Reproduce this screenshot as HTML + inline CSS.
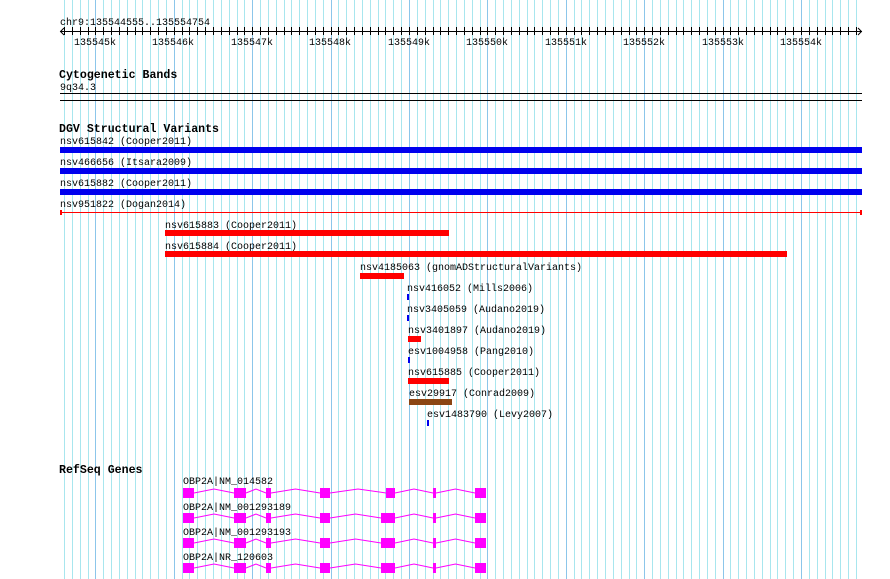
<!DOCTYPE html>
<html><head><meta charset="utf-8"><style>
html,body{margin:0;padding:0;background:#fff;width:890px;height:579px;overflow:hidden}
svg{display:block}
text{font-family:"Liberation Mono",monospace;font-size:10px;fill:#000}
.b{font-weight:bold;font-size:11.6px}
</style></head><body>
<svg id="s" width="890" height="579" xmlns="http://www.w3.org/2000/svg">
<g id="grid"></g>
<g id="ruler" stroke="#000" stroke-width="1"></g>
<text x="60" y="25">chr9:135544555..135554754</text>
<text x="95" y="45" text-anchor="middle">135545k</text>
<text x="173" y="45" text-anchor="middle">135546k</text>
<text x="252" y="45" text-anchor="middle">135547k</text>
<text x="330" y="45" text-anchor="middle">135548k</text>
<text x="409" y="45" text-anchor="middle">135549k</text>
<text x="487" y="45" text-anchor="middle">135550k</text>
<text x="566" y="45" text-anchor="middle">135551k</text>
<text x="644" y="45" text-anchor="middle">135552k</text>
<text x="723" y="45" text-anchor="middle">135553k</text>
<text x="801" y="45" text-anchor="middle">135554k</text>
<text class="b" x="59" y="78">Cytogenetic Bands</text>
<text x="60" y="90">9q34.3</text>
<rect x="60" y="93" width="802" height="1" fill="#000"/>
<rect x="60" y="100" width="802" height="1" fill="#000"/>
<text class="b" x="59" y="132">DGV Structural Variants</text>
<text x="60" y="144">nsv615842 (Cooper2011)</text>
<rect x="60" y="147" width="802" height="6" fill="#0000ee"/>
<text x="60" y="165">nsv466656 (Itsara2009)</text>
<rect x="60" y="168" width="802" height="6" fill="#0000ee"/>
<text x="60" y="186">nsv615882 (Cooper2011)</text>
<rect x="60" y="189" width="802" height="6" fill="#0000ee"/>
<text x="60" y="207">nsv951822 (Dogan2014)</text>
<rect x="60" y="212" width="802" height="1" fill="#f00"/>
<rect x="60" y="210" width="2" height="5" fill="#f00"/>
<rect x="860" y="210" width="2" height="5" fill="#f00"/>
<text x="165" y="228">nsv615883 (Cooper2011)</text>
<rect x="165" y="230" width="284" height="6" fill="#f00"/>
<text x="165" y="249">nsv615884 (Cooper2011)</text>
<rect x="165" y="251" width="622" height="6" fill="#f00"/>
<text x="360" y="270">nsv4185063 (gnomADStructuralVariants)</text>
<rect x="360" y="273" width="44" height="6" fill="#f00"/>
<text x="407" y="291">nsv416052 (Mills2006)</text>
<rect x="407" y="294" width="2" height="6" fill="#0000ee"/>
<text x="407" y="312">nsv3405059 (Audano2019)</text>
<rect x="407" y="315" width="2" height="6" fill="#0000ee"/>
<text x="408" y="333">nsv3401897 (Audano2019)</text>
<rect x="408" y="336" width="13" height="6" fill="#f00"/>
<text x="408" y="354">esv1004958 (Pang2010)</text>
<rect x="408" y="357" width="2" height="6" fill="#0000ee"/>
<text x="408" y="375">nsv615885 (Cooper2011)</text>
<rect x="408" y="378" width="41" height="6" fill="#f00"/>
<text x="409" y="396">esv29917 (Conrad2009)</text>
<rect x="409" y="399" width="43" height="6" fill="#8b4513"/>
<text x="427" y="417">esv1483790 (Levy2007)</text>
<rect x="427" y="420" width="2" height="6" fill="#0000ee"/>
<text class="b" x="59" y="473">RefSeq Genes</text>
<text x="183" y="484">OBP2A|NM_014582</text>
<text x="183" y="510">OBP2A|NM_001293189</text>
<text x="183" y="535">OBP2A|NM_001293193</text>
<text x="183" y="560">OBP2A|NR_120603</text>
<g id="genes"></g>
</svg>
<script>
var NS="http://www.w3.org/2000/svg";
function el(p,t,a){var e=document.createElementNS(NS,t);for(var k in a)e.setAttribute(k,a[k]);p.appendChild(e);return e;}
var g=document.getElementById("grid"),r=document.getElementById("ruler");
var base=95.4,step=7.84;
for(var n=-5;n<110;n++){var x=base+n*step;if(x<60||x>862)continue;
 var xr=Math.round(x)+0.5;var major=(n%10===0);
 el(g,"line",{x1:xr,y1:0,x2:xr,y2:579,stroke:major?"#8cc6ea":"#a8e6ee","stroke-width":1});
 el(r,"line",{x1:xr,y1:27,x2:xr,y2:35});
}
el(r,"line",{x1:60,y1:31.5,x2:862,y2:31.5});
el(r,"polyline",{points:"64,28 60.5,31.5 64,35",fill:"none"});
el(r,"polyline",{points:"858,28 861.5,31.5 858,35",fill:"none"});
var G=document.getElementById("genes");
var rows=[488,513,538,563];
var ex=[[[183,194],[234,246],[266,271],[320,330],[386,395],[433,436],[475,486]],
[[183,194],[234,246],[266,271],[320,330],[381,395],[433,436],[475,486]],
[[183,194],[234,246],[266,271],[320,330],[381,395],[433,436],[475,486]],
[[183,194],[234,246],[266,271],[320,330],[381,395],[433,436],[475,486]]];
rows.forEach(function(y,i){var e=ex[i];
 for(var j=0;j<e.length-1;j++){var a=e[j][1],b=e[j+1][0],m=(a+b)/2;
  el(G,"polyline",{points:a+","+(y+5)+" "+m+","+(y+1)+" "+b+","+(y+5),fill:"none",stroke:"#f0f","stroke-width":1});}
 e.forEach(function(p){el(G,"rect",{x:p[0],y:y,width:p[1]-p[0],height:10,fill:"#f0f"});});
});
</script>
</body></html>
